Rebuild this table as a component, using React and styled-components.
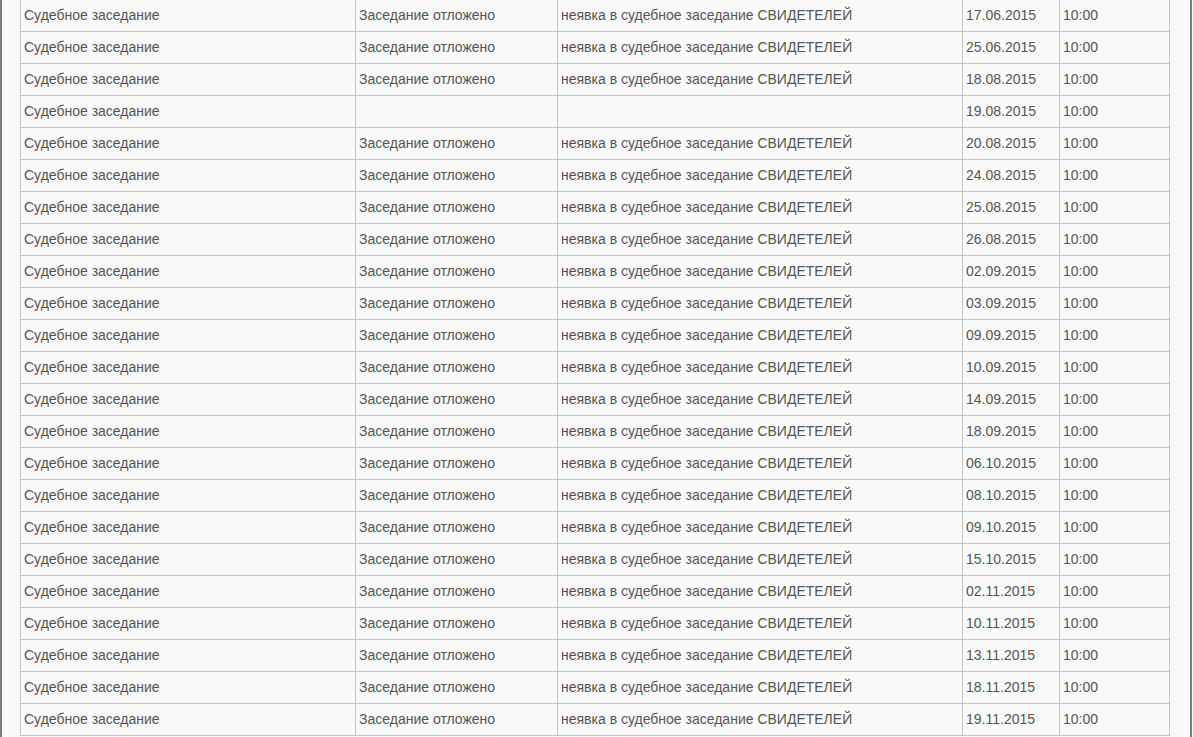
import React from 'react';
import styled, { createGlobalStyle } from 'styled-components';

const GlobalStyle = createGlobalStyle`
  html, body {
    margin: 0;
    padding: 0;
    background: #f9f9f9;
    overflow: hidden;
  }
`;

const Frame = styled.div`
  box-sizing: border-box;
  width: 1192px;
  height: 737px;
  border-left: 2px solid #7b7b7b;
  border-right: 2px solid #7b7b7b;
  padding-left: 18px;
  background: #f9f9f9;
  overflow: hidden;
`;

const Table = styled.table`
  border-collapse: collapse;
  margin-top: -1px;
  table-layout: fixed;
  width: 1150px;
  font-family: Arial, "Liberation Sans", sans-serif;
  font-size: 14px;
  color: #555555;
`;

const Cell = styled.td`
  border: 1px solid #c4c4c4;
  height: 32px;
  padding: 0 3px 2px;
  box-sizing: border-box;
  white-space: nowrap;
  vertical-align: middle;
`;

const widths = [335, 202, 405, 97, 110];

const dates = [
  '17.06.2015', '25.06.2015', '18.08.2015', '19.08.2015', '20.08.2015',
  '24.08.2015', '25.08.2015', '26.08.2015', '02.09.2015', '03.09.2015',
  '09.09.2015', '10.09.2015', '14.09.2015', '18.09.2015', '06.10.2015',
  '08.10.2015', '09.10.2015', '15.10.2015', '02.11.2015', '10.11.2015',
  '13.11.2015', '18.11.2015', '19.11.2015',
];

const rows = dates.map((d) => {
  const empty = d === '19.08.2015';
  return {
    type: 'Судебное заседание',
    result: empty ? '' : 'Заседание отложено',
    reason: empty ? '' : 'неявка в судебное заседание СВИДЕТЕЛЕЙ',
    date: d,
    time: '10:00',
  };
});

const App = () => (
  <>
    <GlobalStyle />
    <Frame>
      <Table>
        <colgroup>
          {widths.map((w, i) => (
            <col key={i} style={{ width: w }} />
          ))}
        </colgroup>
        <tbody>
          {rows.map((r, i) => (
            <tr key={i}>
              <Cell>{r.type}</Cell>
              <Cell>{r.result}</Cell>
              <Cell>{r.reason}</Cell>
              <Cell>{r.date}</Cell>
              <Cell>{r.time}</Cell>
            </tr>
          ))}
        </tbody>
      </Table>
    </Frame>
  </>
);

export default App;
